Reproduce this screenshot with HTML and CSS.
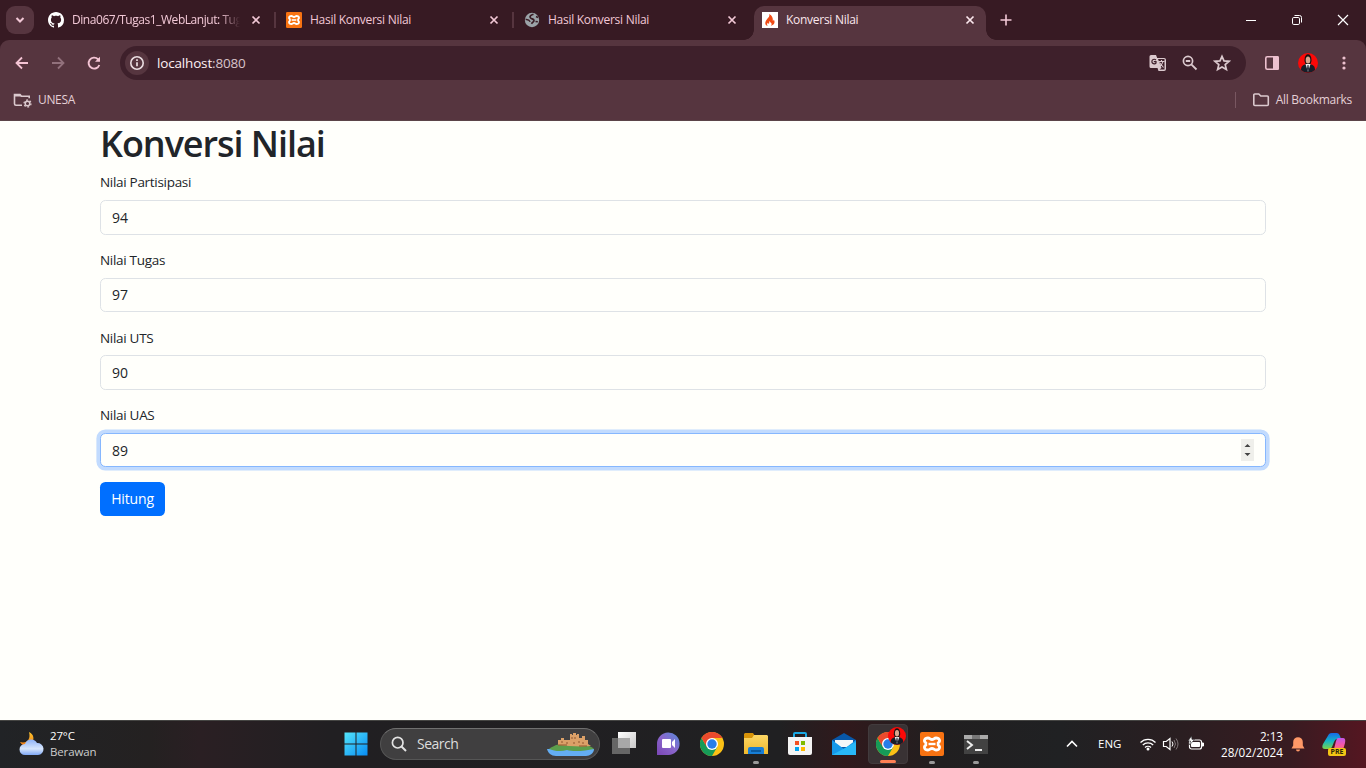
FILE: index.html
```html
<!DOCTYPE html>
<html lang="id">
<head>
<meta charset="utf-8">
<title>Konversi Nilai</title>
<link rel="stylesheet" href="styles.css">
</head>
<body>
<svg width="0" height="0" class="defs">
  <defs>
    <symbol id="close" viewBox="0 0 16 16"><path d="M4.500 4.500l7 7M11.500 4.500l-7 7" fill="none" stroke="currentColor" stroke-width="1.700"/></symbol>
    <symbol id="xampp" viewBox="0 0 24 24"><rect width="24" height="24" rx="2" fill="#f87312"/><path d="M8 6c-3.600 0-4.600 3.200-2.200 4.800v2.400C3.400 14.800 4.400 18 8 18c2 0 2.200-1.500 4-1.500s2 1.500 4 1.500c3.600 0 4.600-3.200 2.200-4.800v-2.400C20.600 9.200 19.600 6 16 6c-2 0-2.200 1.500-4 1.500S10 6 8 6z" fill="none" stroke="#fff" stroke-width="2.800"/><path d="M8.500 12h7" fill="none" stroke="#fff" stroke-width="2.400"/></symbol>
    <symbol id="chrome" viewBox="0 0 24 24"><circle cx="12" cy="12" r="12" fill="#fbc116"/><path d="M1.600 6A12 12 0 0 0 12 24L17.200 15 12 12H5.100z" fill="#169b58"/><path d="M1.600 6A12 12 0 0 1 22.400 6H12L6.800 15z" fill="#ea4a2d"/><circle cx="12" cy="12" r="6" fill="#fff"/><circle cx="12" cy="12" r="4.700" fill="#287de8"/></symbol>
    <symbol id="avatar" viewBox="0 0 20 20"><circle cx="10" cy="10" r="10" fill="#fc0908"/><path d="M3 17c0-4 2-5 5-6h4c3 1 5 2 5 6a10 10 0 0 1-14 0z" fill="#171d27"/><path d="M7.500 11h5L10 19z" fill="#eee"/><path d="M9.500 12h1l.5 4-1 3-1-3z" fill="#202838"/><path d="M6.500 8c-.5-9 7.500-9 7 0l-1 3h-5z" fill="#171313"/><ellipse cx="10" cy="7" rx="2.300" ry="3.600" fill="#dba58e"/></symbol>
    <linearGradient id="gwin" x1="0" y1="0" x2="1" y2="1"><stop stop-color="#54e5fb"/><stop offset="1" stop-color="#078cf4"/></linearGradient>
    <linearGradient id="gmoon" x1="0" y1="0" x2="0" y2="1"><stop stop-color="#fbc52e"/><stop offset="1" stop-color="#f27913"/></linearGradient>
    <linearGradient id="gcloud" x1="0" y1="0" x2="0" y2="1"><stop stop-color="#8eb2f6"/><stop offset=".6" stop-color="#d7e6fc"/><stop offset="1" stop-color="#7fa8f5"/></linearGradient>
    <linearGradient id="gtask" x1="0" y1="0" x2="1" y2="1"><stop stop-color="#fff"/><stop offset="1" stop-color="#c8c8c8"/></linearGradient>
    <linearGradient id="gchat" x1="0" y1="1" x2="1" y2="0"><stop stop-color="#7a45b5"/><stop offset=".5" stop-color="#8a67cc"/><stop offset="1" stop-color="#5689d8"/></linearGradient>
    <linearGradient id="gfold" x1="0" y1="0" x2="0" y2="1"><stop stop-color="#fbd665"/><stop offset="1" stop-color="#efb82c"/></linearGradient>
    <linearGradient id="gcopa" x1="0" y1="0" x2="0" y2="1"><stop stop-color="#1669e8"/><stop offset=".5" stop-color="#12b5c5"/><stop offset="1" stop-color="#7bd34b"/></linearGradient>
    <linearGradient id="gcopb" x1="0" y1="0" x2="0" y2="1"><stop stop-color="#c157e9"/><stop offset=".5" stop-color="#f857a5"/><stop offset="1" stop-color="#f9894c"/></linearGradient>
  </defs>
</svg>
<div class="screen">
  <header class="browser">
    <div class="tabstrip">
      <span class="tabsearch"><svg width="16" height="16"><path d="M4.500 6L8 9.500 11.500 6" fill="none" stroke="currentColor" stroke-width="2"/></svg></span>
      <div class="tab">
        <svg width="16" height="16" viewBox="0 0 16 16"><path fill="#fff" d="M8 0C3.580 0 0 3.580 0 8c0 3.540 2.290 6.530 5.470 7.590.4.070.55-.17.55-.38 0-.19-.01-.82-.01-1.490-2.010.37-2.530-.49-2.690-.94-.09-.23-.48-.94-.82-1.130-.28-.15-.68-.52-.01-.53.63-.01 1.080.58 1.230.82.72 1.210 1.870.87 2.330.66.070-.52.28-.87.51-1.070-1.780-.2-3.640-.89-3.640-3.950 0-.87.31-1.590.82-2.150-.08-.2-.36-1.020.08-2.120 0 0 .67-.21 2.200.82.64-.18 1.320-.27 2-.27s1.360.09 2 .27c1.530-1.040 2.200-.82 2.200-.82.44 1.100.16 1.920.08 2.120.51.56.82 1.270.82 2.150 0 3.070-1.870 3.750-3.650 3.950.29.25.54.73.54 1.480 0 1.070-.01 1.930-.01 2.200 0 .21.15.46.55.38A8.010 8.010 0 0 0 16 8c0-4.420-3.580-8-8-8z"/></svg>
        <span class="title faded">Dina067/Tugas1_WebLanjut: Tug</span><svg class="x" width="16" height="16"><use href="#close"/></svg>
      </div>
      <i class="sep"></i>
      <div class="tab"><svg width="16" height="16"><use href="#xampp"/></svg><span class="title">Hasil Konversi Nilai</span><svg class="x" width="16" height="16"><use href="#close"/></svg></div>
      <i class="sep"></i>
      <div class="tab">
        <svg width="16" height="16"><circle cx="8" cy="8" r="7.200" fill="#9ba3a8"/><path d="M9.500 2.200C7 3 5.500 4 6.200 5.500S9.500 6.800 10 8.200c.4 1.300-1.300 2-2.600 3.500" fill="none" stroke="#3a1d26" stroke-width="1.700"/><path d="M1.600 7.500c2.200-.3 3.800.6 4.600 2.200M12 4.500l2 1M11.500 9.500l2.300.3" fill="none" stroke="#3a1d26" stroke-width="1.400"/></svg>
        <span class="title">Hasil Konversi Nilai</span><svg class="x" width="16" height="16"><use href="#close"/></svg>
      </div>
      <i class="sep clear"></i>
      <div class="tab active">
        <svg width="16" height="16"><path fill="#fff" d="M0 0h16v16H0z"/><path d="M7.200 2c.8 2.500-.8 3.400-2.400 5.500C2 11 3.500 13.500 5.800 14c-1.100-1-.9-2.200.1-3.200.1 1 .6 1 1.100.8.6-.4-.2-1.400.7-2.600.3 1.500 2.100 1.800 1.900 3.200 0 .8-.5 1.400-1 1.700 3-.6 5.200-3.200 3.200-6.400-.1.900-.5 1.300-1 1.300.4-2.500-.7-5.500-3.600-6.800z" fill="#f04b16"/></svg>
        <span class="title">Konversi Nilai</span><svg class="x" width="16" height="16"><use href="#close"/></svg>
      </div>
      <svg class="plus" width="16" height="16"><path d="M8 2.500v11M2.500 8h11" stroke="currentColor" stroke-width="1.600"/></svg>
      <div class="winctl">
        <svg width="16" height="16"><path d="M3 8.500h10" stroke="#fff"/></svg>
        <svg width="16" height="16"><rect x="3.500" y="5.500" width="7" height="7" rx="1.300" fill="none" stroke="#fff"/><path d="M5.500 3.500h5a2 2 0 0 1 2 2v5" fill="none" stroke="#fff"/></svg>
        <svg width="16" height="16"><path d="M3 3l10 10M13 3L3 13" stroke="#fff" stroke-width="1.200"/></svg>
      </div>
    </div>
    <div class="toolbar">
      <svg class="nav" width="20" height="20"><path d="M16 10H4.500M10 4.500L4.500 10l5.500 5.500" fill="none" stroke="#f4c4d4" stroke-width="1.800"/></svg>
      <svg class="nav" width="20" height="20"><path d="M4 10h11.500M10 4.500l5.500 5.500-5.500 5.500" fill="none" stroke="#92717c" stroke-width="1.800"/></svg>
      <svg class="nav" width="20" height="20"><path d="M15.300 12A5.500 5.500 0 1 1 14 6.200l1.300 1.300" fill="none" stroke="#f4c4d4" stroke-width="1.900"/><path d="M16 3.800v5h-5z" fill="#f4c4d4"/></svg>
      <div class="omnibox">
        <span class="info"><svg width="16" height="16"><circle cx="8" cy="8" r="6.200" fill="none" stroke="#eadde1" stroke-width="1.600"/><path d="M8 7.200v4M8 4.300v1.600" stroke="#eadde1" stroke-width="1.700"/></svg></span>
        <span class="url">localhost<em>:8080</em></span>
        <div class="actions">
          <svg width="18" height="18"><path d="M2 1h5l1.200 3H15a2 2 0 0 1 2 2v9a2 2 0 0 1-2 2H9.500l-1-3H2a1.500 1.500 0 0 1-1.500-1.500v-10A1.500 1.500 0 0 1 2 1z" fill="#dbc9ce"/><path d="M9 5h6.500v10.500h-5l2-1.500z" fill="#3e202b"/><path d="M9.500 7.500h6M12.500 6v1.500M14 7.500c-.5 2.500-2 4-3.500 5M10.500 8.500l4 5" fill="none" stroke="#dbc9ce" stroke-width="1.100"/><path d="M6.900 6A2.300 2.300 0 1 0 7 9V7.700H4.800" fill="none" stroke="#3e202b" stroke-width="1.200"/></svg>
          <svg width="18" height="18"><circle cx="7" cy="7" r="4.600" fill="none" stroke="#dbc9ce" stroke-width="1.700"/><path d="M4.800 7h4.400M10.300 10.300l5.200 5.200" stroke="#dbc9ce" stroke-width="1.800"/></svg>
          <svg width="18" height="18"><path d="M9 2.300l2 4.600 5 .4-3.800 3.300 1.200 4.900L9 12.900l-4.400 2.600 1.200-4.900L2 7.300l5-.4z" fill="none" stroke="#dbc9ce" stroke-width="1.700"/></svg>
        </div>
      </div>
      <svg class="panel" width="16" height="16"><rect x="1.800" y="1.800" width="12.400" height="12.400" rx="1.500" fill="none" stroke="#edc1cf" stroke-width="1.600"/><path d="M9 1h4.500A1.500 1.500 0 0 1 15 2.500v11a1.500 1.500 0 0 1-1.500 1.500H9z" fill="#edc1cf"/></svg>
      <svg class="me" width="20" height="20"><use href="#avatar"/></svg>
      <svg width="16" height="16"><g fill="#edc1cf"><circle cx="8" cy="3" r="1.600"/><circle cx="8" cy="8" r="1.600"/><circle cx="8" cy="13" r="1.600"/></g></svg>
    </div>
    <div class="bookmarks">
      <svg width="20" height="16"><path d="M9 13.300H3a1.500 1.500 0 0 1-1.500-1.500V2.500H7l1.500 1.800h7.700v2" fill="none" stroke="#dbc9ce" stroke-width="1.600"/><path d="M1.500 2h5.500l1.500 2.500h-7z" fill="#dbc9ce"/><circle cx="14.500" cy="11.500" r="2.300" fill="none" stroke="#dbc9ce" stroke-width="1.500"/><circle cx="14.500" cy="11.500" r="3.500" fill="none" stroke="#dbc9ce" stroke-width="1.300" stroke-dasharray="1.800 1.860"/></svg>
      <span class="unesa">UNESA</span>
      <i class="rule"></i>
      <svg width="18" height="16"><path d="M1.800 3a1 1 0 0 1 1-1h4l2 2h6.500a1 1 0 0 1 1 1v7.500a1 1 0 0 1-1 1H2.800a1 1 0 0 1-1-1z" fill="none" stroke="#dbc9ce" stroke-width="1.600"/></svg>
      <span class="all">All Bookmarks</span>
    </div>
  </header>
  <main class="page">
    <h1>Konversi Nilai</h1>
    <form>
      <div class="field"><label for="partisipasi">Nilai Partisipasi</label><input id="partisipasi" value="94"></div>
      <div class="field"><label for="tugas">Nilai Tugas</label><input id="tugas" value="97"></div>
      <div class="field"><label for="uts">Nilai UTS</label><input id="uts" value="90"></div>
      <div class="field focused"><label for="uas">Nilai UAS</label><input id="uas" value="89"><span class="spinner"><svg width="13" height="22"><path d="M3.500 8h6l-3-3zM3.500 14h6l-3 3z" fill="#444"/></svg></span></div>
      <button type="button">Hitung</button>
    </form>
  </main>
  <footer class="taskbar">
    <div class="weather">
      <svg width="26" height="26"><path d="M11 1c5 2 6 8 2 12-4 3-9 2-11-2 7 2 11-3 9-10z" fill="url(#gmoon)"/><path d="M7 24a5.500 5.500 0 0 1 0-11 6.500 6.500 0 0 1 12-1 5.800 5.800 0 0 1 1 12z" fill="url(#gcloud)"/></svg>
      <div><b>27°C</b><span>Berawan</span></div>
    </div>
    <svg class="start" width="24" height="24"><path d="M.5.5h11v11H.5zM12.500.5h11v11h-11zM.5 12.500h11v11H.5zM12.500 12.500h11v11h-11z" fill="url(#gwin)"/></svg>
    <div class="search">
      <svg width="16" height="16"><circle cx="6.700" cy="6.700" r="5.300" fill="none" stroke="#e3e3e3" stroke-width="1.700"/><path d="M10.500 10.500l4.500 4.500" stroke="#e3e3e3" stroke-width="2"/></svg>
      <span>Search</span>
      <svg class="castle" width="48" height="26"><path d="M0 18h47c0 4-4 7-8 7H9c-5 0-8-3-9-7z" fill="#64aef3"/><path d="M2 18c5-4 12-6 22-6 10 0 19 2 23 6-9 2-21 3-27 1-6 2-13 1-18-1z" fill="#5c9e4b"/><path d="M11 14V9h3V7h3v2h6V3h2v1h1V2h3v2h1V3h2v4h3V5h3v4h3v4l3 2c-10 1-24 0-33-1z" fill="#dba068"/><path d="M14 11h2m3 1h2m4-6v2m3-2v2m-2 4h2m4-2v2m4-1v2M11 14h9m12 1h8" stroke="#91562f"/></svg>
    </div>
    <div class="apps">
      <span class="app"><svg width="24" height="24"><path d="M6 0h18v16H6z" fill="url(#gtask)"/><path d="M0 6h18v16H0z" fill="#666"/><path d="M6 6h12v10H6z" fill="#a8a8a8"/></svg></span>
      <span class="app"><svg width="24" height="24"><path d="M1 23V12a11.300 11.300 0 1 1 11.500 11z" fill="url(#gchat)"/><rect x="6" y="7" width="9" height="9" rx="1" fill="#fff"/><path d="M16 10l3-3v9l-3-3z" fill="#fff"/></svg></span>
      <span class="app"><svg width="24" height="24"><use href="#chrome"/></svg></span>
      <span class="app"><svg width="24" height="24"><path d="M1 1h8l2 3h12v8H0V2z" fill="#d79308"/><path d="M0 6h8l2-3h13l1 1v18H0z" fill="url(#gfold)"/><path d="M4 22v-5q0-2 2-2h12q2 0 2 2v5z" fill="#177ed6"/><path d="M7 19h10" stroke="#0b5a9f" stroke-width="2"/></svg><i class="dot"></i></span>
      <span class="app"><svg width="24" height="24"><path d="M6 6V2q0-1 1-1h10q1 0 1 1v4" fill="none" stroke="#19a8e3" stroke-width="2"/><path d="M0 5h24v16q0 2-2 2H2q-2 0-2-2z" fill="#f4f4f4"/><path fill="#f25022" d="M7 9h4v4H7z"/><path fill="#7fba00" d="M13 9h4v4h-4z"/><path fill="#00a4ef" d="M7 15h4v4H7z"/><path fill="#ffb900" d="M13 15h4v4h-4z"/></svg></span>
      <span class="app"><svg width="24" height="24"><path d="M0 8l12-7 12 7v15H0z" fill="#0857a8"/><path d="M3 8h18v7H3z" fill="#f4f7f9"/><path d="M0 8l12 9 12-9v15H0z" fill="#1598ea"/><path d="M0 23l24-13v13z" fill="#28b8f8"/></svg></span>
      <span class="app current"><svg width="24" height="24"><use href="#chrome"/></svg><svg class="mini" width="18" height="18"><use href="#avatar"/></svg><i class="dot"></i></span>
      <span class="app"><svg width="24" height="24"><use href="#xampp"/></svg><i class="dot"></i></span>
      <span class="app"><svg width="24" height="24"><path d="M0 3h24v19H0z" fill="#424242"/><path d="M0 3h24v4H0z" fill="#aaa"/><path d="M8 3h8v4H8z" fill="#777"/><path d="M3 9l5 4-5 4M11 18h7" fill="none" stroke="#eee" stroke-width="1.900"/></svg><i class="dot"></i></span>
    </div>
    <div class="tray">
      <svg width="14" height="14"><path d="M2 9.500l5-5 5 5" fill="none" stroke="#fff" stroke-width="1.600"/></svg>
      <span class="lang">ENG</span>
      <svg class="wifi" width="18" height="16"><g fill="none" stroke="#fff" stroke-width="1.300"><path d="M1.500 6.500a10.500 10.500 0 0 1 15 0M3.800 9a7.300 7.300 0 0 1 10.400 0M6 11.500a4.300 4.300 0 0 1 6 0"/></g><circle cx="9" cy="13" r="1.500" fill="#fff"/></svg>
      <svg class="vol" width="18" height="16"><path d="M1.500 5.500h2.700L8 2.500v11l-3.800-3H1.500z" fill="none" stroke="#fff" stroke-width="1.200"/><path d="M10 5.500q2 2.500 0 5" fill="none" stroke="#fff"/><path d="M12 4q3 4 0 8M14 2.500q4 5.500 0 11" fill="none" stroke="#807779"/></svg>
      <svg width="18" height="16"><rect x="2.500" y="4" width="12" height="9" rx="2" fill="none" stroke="#fff" stroke-width="1.200"/><path d="M4.500 6.500h8v4h-8zM15 7h1.500v3H15z" fill="#fff" stroke="#fff"/><path d="M4.500 0L1 5h2.500L2.500 9l5-5.500H5z" fill="#fff" stroke="#29262a" stroke-width=".6"/></svg>
      <div class="clock"><span>2:13</span><span>28/02/2024</span></div>
      <svg class="bell" width="14" height="16"><path d="M2.200 6A4.800 4.800 0 0 1 11.800 6v3.500l1.700 3H.5l1.700-3z" fill="#ff9867"/><path d="M5 13.500h4a2 2 0 0 1-4 0z" fill="#ff9867"/></svg>
      <span class="copilot"><svg width="24" height="24"><path d="M7 2q1-1 3-1h5q2 0 3 3l1 3h-4q-2 0-3 3l-2 5q-1 2-3 2H3q-4 0-2-5z" fill="url(#gcopa)"/><path d="M16 6h5q3 0 2 5l-2 7q-1 2-3 2H9q2 0 3-3l2-8q1-3 2-3z" fill="url(#gcopb)"/></svg><b>PRE</b></span>
    </div>
  </footer>
</div>
</body>
</html>
```
FILE: styles.css
```css
* { box-sizing: border-box; }
body { margin: 0; font-family: "Open Sans", "Noto Sans", sans-serif; }
svg { display: block; flex: none; }
.defs { position: absolute; }
.screen { width: 1366px; height: 768px; display: flex; flex-direction: column; overflow: hidden; background: #fffffb; }
.browser { height: 121px; flex: none; background: #371a23; }

.tabstrip { height: 40px; display: flex; padding: 6px 15px 0 6px; color: #f2c8d6; }
.tabsearch { width: 28px; height: 28px; margin-right: 6px; border-radius: 9px; background: #56353f; display: grid; place-items: center; }
.tab { width: 232px; height: 34px; flex: none; display: flex; align-items: center; padding: 0 8px 6px; position: relative; }
.title { width: 168px; margin-left: 8px; font-size: 12px; line-height: 16px; letter-spacing: -0.28px; white-space: nowrap; }
.faded { letter-spacing: -0.45px; mask-image: linear-gradient(90deg, #000 148px, transparent 168px); }
.x { margin-left: 8px; }
.sep { width: 2px; height: 16px; margin: 6px 2px 0; background: #56353f; }
.clear { background: transparent; }
.active { background: #56353f; border-radius: 10px 10px 0 0; color: #fbe7ed; }
.active::before, .active::after { content: ""; position: absolute; bottom: 0; width: 10px; height: 10px; }
.active::before { left: -10px; background: radial-gradient(circle at 0 0, transparent 9.5px, #56353f 10px); }
.active::after { right: -10px; background: radial-gradient(circle at 100% 0, transparent 9.5px, #56353f 10px); }
.plus { margin: 6px 0 0 12px; }
.winctl { margin: 6px 0 0 auto; display: flex; gap: 30px; }

.toolbar { height: 46px; background: #56353f; border-radius: 9px 9px 0 0; display: flex; align-items: center; padding: 0 14px 0 12px; }
.nav { margin-right: 16px; }
.omnibox { width: 1126px; height: 34px; border-radius: 17px; background: #3e202b; display: flex; align-items: center; padding: 0 15px 0 5px; }
.info { width: 24px; height: 24px; border-radius: 50%; background: #56353f; display: grid; place-items: center; }
.url { margin-left: 8px; font-size: 13.5px; color: #fff0f4; letter-spacing: -0.17px; }
.url em { font-style: normal; color: #d8c3ca; }
.actions { margin-left: auto; display: flex; gap: 14px; }
.panel { margin-left: 18px; }
.me { margin: 0 18px; }
.bookmarks { height: 35px; background: #56353f; border-bottom: 1px solid #5b4448; display: flex; align-items: center; padding: 0 14px 6px 13px; color: #e4d0d6; font-size: 12px; }
.unesa { margin-left: 5px; letter-spacing: -0.35px; }
.rule { width: 1px; height: 16px; background: #795761; margin: 0 16px 0 auto; }
.all { margin-left: 6px; letter-spacing: -0.28px; }
.unesa, .all { margin-top: -1px; }

.page { height: 599px; flex: none; padding: 0 100px; color: #212529; font-size: 14px; }
h1 { margin: 0 0 7.2px; font-size: 36px; font-weight: 600; line-height: 43.2px; letter-spacing: -1.05px; padding-top: 1px; height: 43.2px; }
.field { position: relative; display: flex; flex-direction: column; margin-bottom: 14.4px; }
label { line-height: 21.6px; padding-top: 1px; margin-bottom: 6.2px; font-size: 13.5px; letter-spacing: -0.3px; }
input { height: 34.4px; border: 1px solid #dee2e6; border-radius: 5.4px; background: #fffffb; padding: 0 11px; font: inherit; letter-spacing: -0.1px; color: inherit; outline: none; }
.focused input { border-color: #86b7fe; box-shadow: 0 0 0 3.6px #c2dbfe; }
.spinner { position: absolute; right: 12px; bottom: 6px; width: 13px; height: 22px; background: #efefeb; }
button { height: 34.4px; width: 65px; padding: 0; border: 0; border-radius: 5.4px; background: #006fff; color: #fff; font: inherit; letter-spacing: -0.15px; display: block; }

.taskbar { height: 48px; flex: none; border-top: 1px solid #454543; background: linear-gradient(90deg, #212326 0, #242121 150px, #2a1f23 200px, #211f22 330px, #202022 780px, #30191c 845px, #211f20 940px, #202123 1060px, #2a1e21 1180px, #381b21 1290px, #551621 1366px); display: flex; align-items: center; padding-bottom: 2px; color: #fff; font-size: 12px; }
.weather { display: flex; align-items: center; width: 344px; padding-left: 18px; }
.weather div { margin-left: 6px; display: flex; flex-direction: column; line-height: 16px; font-size: 11.5px; letter-spacing: -0.15px; }
.weather b { font-weight: 400; }
.weather span { color: #ccc; }
.search { width: 220px; height: 32px; margin: 0 4px 0 12px; border: 1px solid #555; border-top-color: #707070; border-radius: 16px; background: #403f40; display: flex; align-items: center; padding: 0 4px 0 10px; color: #ddd; font-size: 14px; }
.search span { margin-left: 10px; letter-spacing: -0.5px; }
.castle { margin-left: auto; }
.apps { display: flex; gap: 4px; }
.app { width: 40px; height: 40px; display: grid; place-items: center; position: relative; }
.dot { position: absolute; left: 17px; bottom: 0; width: 6px; height: 3px; border-radius: 2px; background: #999; }
.current { background: #393234; border: 1px solid #423b3d; border-radius: 4px; }
.current .dot { left: 11px; width: 16px; background: #ff8054; }
.mini { position: absolute; right: 1px; top: 2px; }
.tray { display: flex; align-items: center; margin-left: auto; padding-right: 20px; }
.lang { width: 24px; margin: 0 17px 0 19px; font-size: 11.5px; }
.vol { margin: 0 7px 0 5px; }
.clock { width: 78px; text-align: right; line-height: 16px; display: flex; flex-direction: column; font-size: 11.7px; }
.bell { margin: 0 17px 0 8px; }
.copilot { position: relative; }
.copilot b { position: absolute; left: 6px; bottom: 0; width: 18px; height: 8px; border-radius: 2px; background: #f4c515; color: #2e2607; font-size: 7px; line-height: 8px; text-align: center; }
```
